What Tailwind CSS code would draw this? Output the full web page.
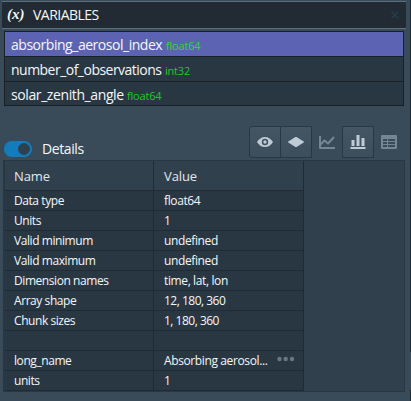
<!DOCTYPE html>
<html lang="en">
<head>
<meta charset="utf-8">
<title>Variables</title>
<script src="https://cdn.jsdelivr.net/npm/@tailwindcss/browser@4"></script>
</head>
<body class="relative h-[401px] w-[411px] overflow-hidden bg-[#394b59] pt-px pl-0.5 font-['Open_Sans','Noto_Sans',sans-serif] text-[#f5f8fa]">
  <header class="flex h-7 w-[404px] items-center border-y border-[#5c7080] bg-[#222b33] pr-1.5 pl-[5px]">
    <span class="w-[26px] pb-0.5 font-['Liberation_Serif',serif] text-[15px] leading-none font-bold italic">(x)</span>
    <h1 class="text-[14px] leading-5 tracking-[-0.52px]">VARIABLES</h1>
    <svg class="ml-auto size-2.5" viewBox="0 0 10 10" fill="none" stroke="#243b4a" stroke-width="1.5"><path d="M1.5 1.5l7 7M8.500 1.500l-7 7"/></svg>
  </header>

  <ul class="mt-0.5 ml-0.5 h-[75px] w-[400px] divide-y divide-[#182026] border border-[#182026] bg-[#293742] text-[14px] leading-[25px]">
    <li class="flex h-[25px] items-baseline gap-1 bg-[#5c63b2] pl-1.5"><span class="w-[151px] tracking-[-0.47px] whitespace-nowrap">absorbing_aerosol_index</span><span class="text-[11px] tracking-[-0.2px] text-[#2ed83c]">float64</span></li>
    <li class="flex h-[25px] items-baseline gap-1 pl-1.5"><span class="w-[150px] tracking-[-0.52px] whitespace-nowrap">number_of_observations</span><span class="text-[11px] tracking-[-0.2px] text-[#18cc22]">int32</span></li>
    <li class="flex h-[23px] items-baseline gap-1 pl-1.5"><span class="w-[112px] tracking-[-0.4px] whitespace-nowrap">solar_zenith_angle</span><span class="text-[11px] tracking-[-0.2px] text-[#18cc22]">float64</span></li>
  </ul>

  <div class="mt-5 flex h-8 w-[403px] items-start">
    <div class="mt-[15px] ml-0.5 flex h-4 w-7 items-center justify-end rounded-full bg-[#137cbd] pr-0.5"><span class="size-3 rounded-full border border-[#24465c] bg-[#30404d]"></span></div>
    <span class="mt-[13px] ml-2.5 text-[14px] leading-5 tracking-[-0.4px]">Details</span>
    <div class="ml-auto flex h-8">
      <button class="flex h-8 w-8 items-center justify-center rounded-l-[3px] border border-[#293742] bg-linear-to-b from-[#445664] to-[#3c4e5c]">
        <svg class="size-4" viewBox="0 0 16 16"><path fill="#bfccd6" fill-rule="evenodd" d="M8 3C4.700 3 1.800 5 0 8c1.800 3 4.700 5 8 5s6.200-2 8-5c-1.800-3-4.700-5-8-5Zm0 1.800a3.200 3.200 0 1 1 0 6.400a3.200 3.200 0 0 1 0-6.400Zm0 1.500a1.700 1.700 0 1 0 0 3.400a1.700 1.700 0 0 0 0-3.400Z"/></svg>
      </button>
      <button class="-ml-px flex h-8 w-8 items-center justify-center border border-[#293742] bg-linear-to-b from-[#445664] to-[#3c4e5c]">
        <svg class="size-4" viewBox="0 0 16 16"><path fill="#bfccd6" d="M7.400 3.100.300 7.400c-.4.300-.4.900 0 1.200l7.100 4.300c.4.200.8.200 1.200 0l7.100-4.300c.4-.3.4-.9 0-1.200L8.600 3.100a1.200 1.200 0 0 0-1.200 0Z"/></svg>
      </button>
      <button class="-ml-px flex h-8 w-8 items-center justify-center">
        <svg class="size-4" viewBox="0 0 16 16" fill="none" stroke="#758692" stroke-width="2"><path d="M1 2v12h15M1.500 10.500l4-4 3.500 3 6-6.500" stroke-linejoin="round"/></svg>
      </button>
      <button class="-ml-px flex h-8 w-8 items-center justify-center border border-[#293742] bg-linear-to-b from-[#445664] to-[#3c4e5c]">
        <svg class="size-4" viewBox="0 0 16 16" fill="#bfccd6"><path d="M1.500 6h3v6h-3zM6.500 1h3v11h-3zM11.500 4h3v8h-3zM.500 13h15v2H.500z"/></svg>
      </button>
      <button class="-ml-px flex h-8 w-8 items-center justify-center">
        <svg class="size-4" viewBox="0 0 16 16" fill="#758692"><path fill-rule="evenodd" d="M1 1h14a1 1 0 0 1 1 1v12a1 1 0 0 1-1 1H1a1 1 0 0 1-1-1V2a1 1 0 0 1 1-1ZM2 5h4v2H2ZM7 5h7v2H7ZM2 8h4v2H2ZM7 8h7v2H7ZM2 11h4v2H2ZM7 11h7v2H7Z"/></svg>
      </button>
    </div>
  </div>

  <div class="mt-0.5 ml-px h-[232px] w-[402px] border border-l-2 border-[#293742] bg-[#30404d] text-[12px]">
    <table class="w-[299px] table-fixed border-separate border-spacing-0">
      <colgroup><col class="w-[149px]"><col class="w-[150px]"></colgroup>
      <thead>
        <tr class="h-[30px] text-left text-[13px] leading-5 tracking-[-0.1px] text-[#e1e8ed]"><th class="border-r border-b border-[#202b33] p-0 pl-[9px] font-medium">Name</th><th class="border-r border-b border-[#202b33] p-0 pl-2.5 font-medium">Value</th></tr>
      </thead>
      <tbody id="rows" class="bg-[#293742] font-medium"></tbody>
    </table>
  </div>

  <div class="absolute top-0 right-0 h-[352px] w-px bg-[#202b33]"></div>
  <div class="absolute right-0 bottom-0 h-[11px] w-px bg-[#202b33]"></div>
  <script>
    const data = [['Data type','float64'],['Units','1'],['Valid minimum','undefined'],['Valid maximum','undefined'],['Dimension names','time, lat, lon'],['Array shape','12, 180, 360'],['Chunk sizes','1, 180, 360'],['',''],['long_name','Absorbing aerosol...'],['units','1']];
    const dots = '<svg class="ml-auto mr-2 h-4 w-[18px]" viewBox="0 0 18 16" fill="#697884"><circle cx="2.500" cy="6" r="2.200"/><circle cx="8.700" cy="6" r="2.200"/><circle cx="15" cy="6" r="2.200"/></svg>';
    const tracking = (v) => /^\d/.test(v) ? 'tracking-[-0.5px]' : 'tracking-[-0.38px]';
    document.getElementById('rows').innerHTML = data.map(([n, v]) => `<tr class="h-5 leading-[18px]"><td class="border-r border-b border-[#202b33] p-0 pt-px pl-[9px] tracking-[-0.43px]">${n}</td><td class="border-r border-b border-[#202b33] p-0 pl-2.5"><div class="flex h-[19px] items-center pt-px whitespace-nowrap ${tracking(v)}">${v}${n === 'long_name' ? dots : ''}</div></td></tr>`).join('');
  </script>
</body>
</html>
